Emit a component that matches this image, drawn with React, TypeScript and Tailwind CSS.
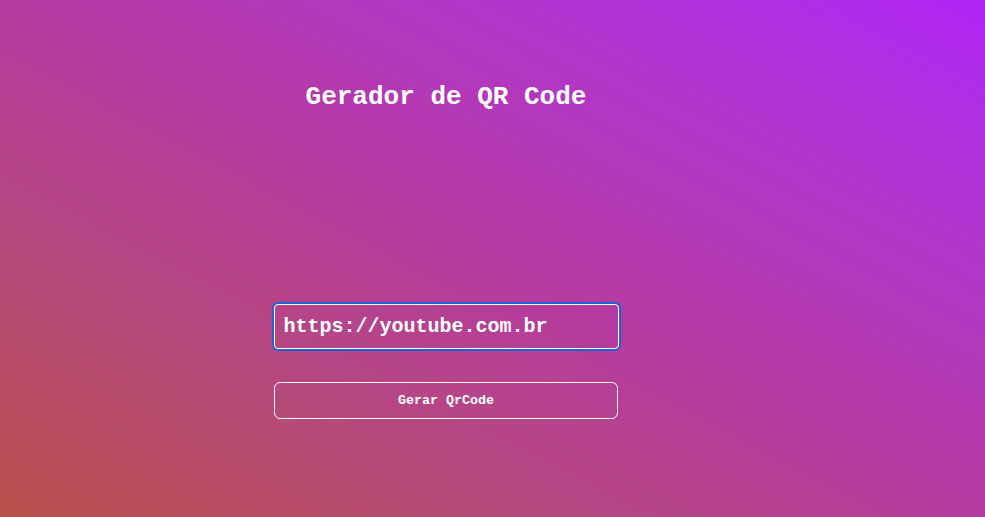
import { useState } from "react";

export default function App() {
  const [url, setUrl] = useState("https://youtube.com.br");

  return (
    <div className="min-h-[517px] h-screen w-full bg-linear-to-tr from-[#ba514a] via-[#b53aa0] to-[#b024f6] font-['Liberation_Mono',monospace] text-white">
      <div className="w-[892px] flex flex-col items-center">
        <h1 className="mt-[82px] text-[26px] leading-[30px] font-bold">
          Gerador de QR Code
        </h1>
        <input
          autoFocus
          value={url}
          onChange={(e) => setUrl(e.target.value)}
          className="mt-[192px] w-[345px] h-[45px] rounded-[4px] border border-white bg-transparent px-[9px] text-[20px] font-bold text-white caret-white outline-none ring-2 ring-[#1a66d6]"
        />
        <button className="mt-[33px] w-[344px] h-[37px] rounded-[6px] border border-white bg-transparent text-[13.33px] font-bold text-white">
          Gerar QrCode
        </button>
      </div>
    </div>
  );
}
